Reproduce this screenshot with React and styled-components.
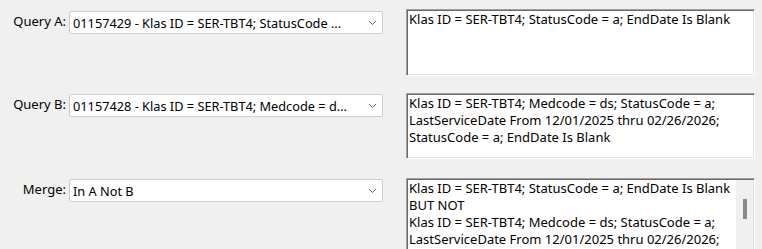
import styled, { createGlobalStyle } from 'styled-components';

const GlobalStyle = createGlobalStyle`
  body {
    margin: 0;
    background: #f0f0f0;
    font-family: "Noto Sans", "Open Sans", sans-serif;
    font-size: 13px;
    color: #000;
  }
`;

const Page = styled.div`
  display: flex;
  flex-direction: column;
  padding-top: 9px;
  height: 240px;
  overflow: hidden;
`;

const Row = styled.div`
  display: flex;
  align-items: flex-start;
  margin-bottom: ${p => p.$gap || 0}px;
`;

const Label = styled.div`
  width: 66px;
  text-align: right;
  margin-top: ${p => p.$top}px;
  line-height: 16px;
  white-space: nowrap;
`;

const Combo = styled.div`
  margin-left: 3px;
  margin-top: ${p => p.$top}px;
  width: 314px;
  height: 23px;
  box-sizing: border-box;
  background: #fff;
  border: 1px solid #cfcfcf;
  border-radius: 2px;
  display: flex;
  align-items: center;
  padding: 0 5px 0 3px;
  gap: 6px;
`;

const ComboText = styled.span`
  flex: 1;
  font-size: 12.75px;
  white-space: nowrap;
  overflow: hidden;
`;

const Chevron = () => (
  <svg width="9" height="6" viewBox="0 0 9 6">
    <path d="M1 1 L4.5 4.5 L8 1" fill="none" stroke="#606060" strokeWidth="1" />
  </svg>
);

const TextBox = styled.div`
  margin-left: 23px;
  width: 349px;
  height: ${p => p.$h}px;
  box-sizing: border-box;
  background: #fff;
  border-style: solid;
  border-width: 1px;
  border-color: #a0a0a0 #ffffff #ffffff #a0a0a0;
  box-shadow: inset 1px 1px 0 #696969, inset -1px -1px 0 #e3e3e3;
  display: flex;
  overflow: hidden;
`;

const BoxText = styled.div`
  flex: 1;
  padding: 1px 2px 0 2px;
  font-size: 13px;
  line-height: 17px;
  white-space: nowrap;
`;

const ScrollTrack = styled.div`
  width: 17px;
  margin: 1px 1px 0 0;
  background: #f0f0f0;
  display: flex;
  justify-content: center;
  padding-top: 19px;
`;

const Thumb = styled.div`
  width: 4px;
  height: 20px;
  background: #8a8a8a;
`;

const rows = [
  {
    label: 'Query A:',
    value: '01157429 - Klas ID = SER-TBT4; StatusCode ...',
    lines: ['Klas ID = SER-TBT4; StatusCode = a; EndDate Is Blank'],
    h: 67,
    gap: 17,
    comboTop: 2,
  },
  {
    label: 'Query B:',
    value: '01157428 - Klas ID = SER-TBT4; Medcode = d...',
    lines: [
      'Klas ID = SER-TBT4; Medcode = ds; StatusCode = a;',
      'LastServiceDate From 12/01/2025 thru 02/26/2026;',
      'StatusCode = a; EndDate Is Blank',
    ],
    h: 66,
    gap: 19,
    comboTop: 1,
  },
  {
    label: 'Merge:',
    value: 'In A Not B',
    lines: [
      'Klas ID = SER-TBT4; StatusCode = a; EndDate Is Blank',
      'BUT NOT',
      'Klas ID = SER-TBT4; Medcode = ds; StatusCode = a;',
      'LastServiceDate From 12/01/2025 thru 02/26/2026;',
      'StatusCode = a; EndDate Is Blank',
    ],
    h: 90,
    comboTop: 1,
    scroll: true,
  },
];

export default function App() {
  return (
    <>
      <GlobalStyle />
      <Page>
        {rows.map(r => (
          <Row key={r.label} $gap={r.gap}>
            <Label $top={r.comboTop + 2}>{r.label}</Label>
            <Combo $top={r.comboTop}>
              <ComboText>{r.value}</ComboText>
              <Chevron />
            </Combo>
            <TextBox $h={r.h}>
              <BoxText>
                {r.lines.map((l, i) => (
                  <div key={i}>{l}</div>
                ))}
              </BoxText>
              {r.scroll && (
                <ScrollTrack>
                  <Thumb />
                </ScrollTrack>
              )}
            </TextBox>
          </Row>
        ))}
      </Page>
    </>
  );
}
